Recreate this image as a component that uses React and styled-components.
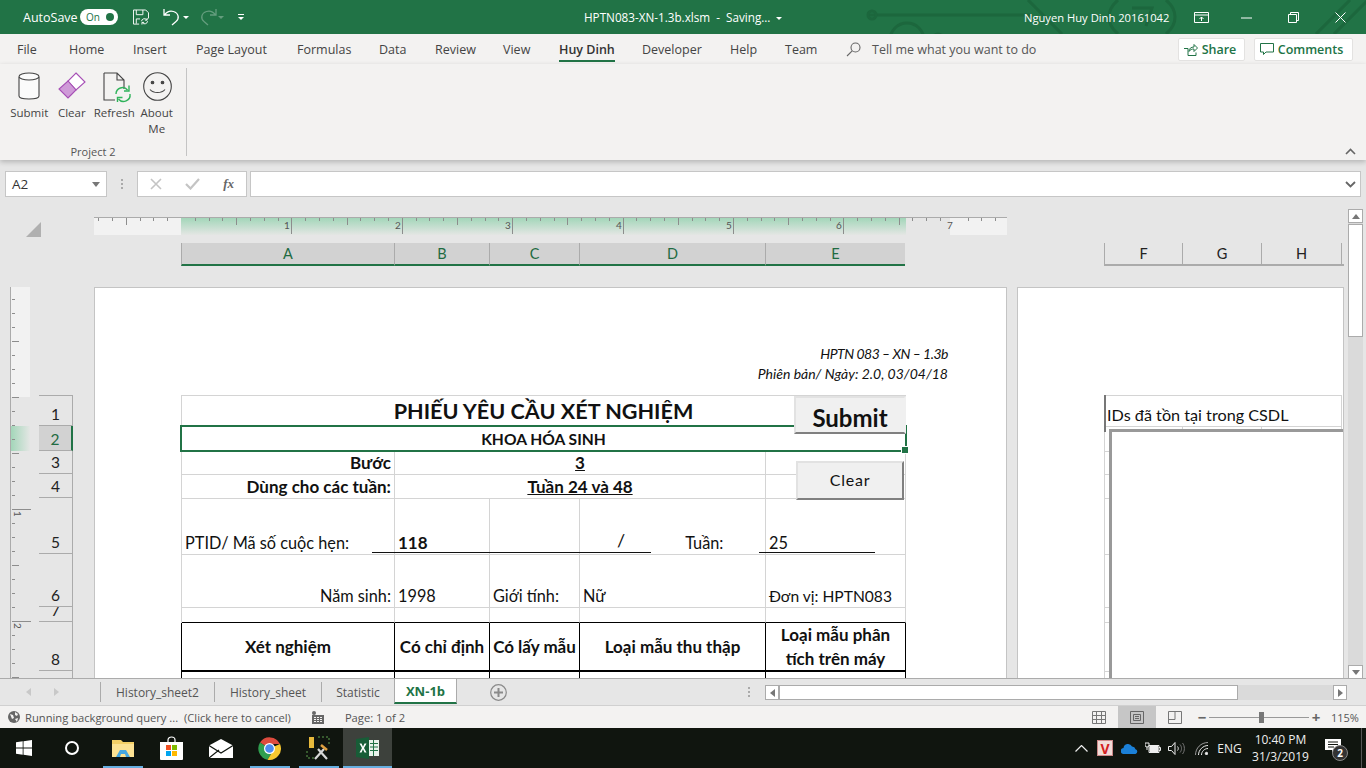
import React from 'react';
import styled, { createGlobalStyle } from 'styled-components';

const UI_FONT = '"Open Sans", "Noto Sans", sans-serif';
const SHEET_FONT = 'Lato, "Noto Sans", sans-serif';
const GREEN = '#217346';
const LINE = '#ababab';
const GRID = '#d4d4d4';

const GlobalStyle = createGlobalStyle`
  html, body {
    margin: 0;
    padding: 0;
    overflow: hidden;
    background: #e6e6e6;
  }
  * {
    box-sizing: border-box;
  }
`;

const tabs = [
  ['File', 52],
  ['Home', 64],
  ['Insert', 63],
  ['Page Layout', 101],
  ['Formulas', 82],
  ['Data', 56],
  ['Review', 68],
  ['View', 56],
  ['Huy Dinh', 83, true],
  ['Developer', 88],
  ['Help', 55],
  ['Team', 61],
];

const columns = [
  ['A', 213],
  ['B', 95],
  ['C', 90],
  ['D', 186],
  ['E', 140],
];

const rowHeights = [31, 25, 23, 24, 56, 53, 15, 49, 30];

const sheetTabs = [
  ['History_sheet2', 114],
  ['History_sheet', 107],
  ['Statistic', 73],
];

const range = (from, to) => Array.from({ length: to - from + 1 }, (_, i) => from + i);

const App = () => (
  <Window>
    <GlobalStyle />
    <TitleBar>
      <Circuit width="520" height="34" viewBox="0 0 520 34" fill="none">
        <path d="M8 15H170M30 40a17 17 0 0 1 34 0M72 40a6 6 0 0 1 12 0" />
        <circle cx="12" cy="15" r="4" />
        <path d="M168 0l34 34M258 0c-12 10-12 24 0 34M306 0c12 10 12 24 0 34M272 8h20l-6 18M456 34L490 0M474 34L508 0" />
      </Circuit>
      <QuickAccess>
        <AutoSave>AutoSave</AutoSave>
        <Toggle>
          On
          <ToggleKnob />
        </Toggle>
        <QuickIcon $w={16} $ml={15}>
          <svg width="17" height="17" viewBox="0 0 17 17" fill="none" stroke="#fff" strokeWidth="1">
            <path d="M.5.5h13l3 3v6M.5.5v15h6M3.5.5v5h7v-5M3.5 15v-5h4" />
            <path d="M9 12.5a3.2 3.2 0 0 1 5.6-1.6M15.5 12.5a3.2 3.2 0 0 1-5.6 1.6" />
            <path d="M15 9v2.3h-2.3M9.5 16v-2.3h2.3" />
          </svg>
        </QuickIcon>
        <QuickIcon $w={18} $ml={14}>
          <svg width="18" height="18" viewBox="0 0 18 18" fill="none" stroke="#fff" strokeWidth="1.3">
            <path d="M1 1v6h6M1.5 7C4 3.5 7 2.5 10.5 3.5c5.5 1.7 6 7.5 2.5 10L9 17" />
          </svg>
        </QuickIcon>
        <Caret $ml={2} />
        <QuickIcon $w={18} $ml={10} $dim>
          <svg width="18" height="18" viewBox="0 0 18 18" fill="none" stroke="#fff" strokeWidth="1.3">
            <path d="M17 1v6h-6M16.5 7C14 3.5 11 2.5 7.5 3.5c-5.5 1.7-6 7.5-2.5 10L9 17" />
          </svg>
        </QuickIcon>
        <Caret $ml={1} $dim />
        <CustomizeMark $ml={14}>
          <Caret />
        </CustomizeMark>
      </QuickAccess>
      <WindowTitle>
        HPTN083-XN-1.3b.xlsm&nbsp; -&nbsp; Saving...
        <Caret $ml={6} />
      </WindowTitle>
      <WindowControls>
        <UserName>Nguyen Huy Dinh 20161042</UserName>
        <svg width="15" height="11" viewBox="0 0 15 11" fill="none" stroke="#fff">
          <path d="M.5.5h14v10H.5zM.5 3h14M7.5 9V5M5.5 7l2-2 2 2" />
        </svg>
        <svg width="11" height="11" viewBox="0 0 11 11" stroke="#fff">
          <path d="M0 6h11" />
        </svg>
        <svg width="11" height="11" viewBox="0 0 11 11" fill="none" stroke="#fff">
          <path d="M.5 2.5h8v8h-8zM2.5 2.5v-2h8v8h-2" />
        </svg>
        <svg width="11" height="11" viewBox="0 0 11 11" stroke="#fff">
          <path d="M.5.5l10 10M10.5.5l-10 10" />
        </svg>
      </WindowControls>
    </TitleBar>

    <TabRow>
      {tabs.map(([label, width, active]) => (
        <RibbonTab key={label} $w={width} $active={active}>
          <span>{label}</span>
        </RibbonTab>
      ))}
      <svg width="15" height="15" viewBox="0 0 15 15" fill="none" stroke="#666" strokeWidth="1.1">
        <circle cx="9.5" cy="5.5" r="4.5" />
        <path d="M6.2 8.8L1 14" />
      </svg>
      <TellMe>Tell me what you want to do</TellMe>
      <ActionButton $ml={141} $w={67}>
        <svg width="15" height="15" viewBox="0 0 15 15" fill="none" stroke={GREEN}>
          <path d="M1 6.5h4v7h8v-3M6 9.5c0-3 2-4.5 5-4.5V2.5l3.5 3.5L11 9.5V7c-2 0-4 .5-5 2.5z" />
        </svg>
        Share
      </ActionButton>
      <ActionButton $ml={9} $w={99}>
        <svg width="14" height="14" viewBox="0 0 14 14" fill="none" stroke={GREEN}>
          <path d="M.5 1.5h13v8.5H6L3.5 12.5V10h-3z" />
        </svg>
        Comments
      </ActionButton>
    </TabRow>

    <Ribbon>
      <RibbonGroup>
        <RibbonButtons>
          <RibbonButton>
            <IconSlot>
              <svg width="22" height="28" viewBox="0 0 22 28" fill="#fbfbfb" stroke="#444" strokeWidth="1.1">
                <path d="M1 5v19c0 1.8 4.5 3 10 3s10-1.2 10-3V5" />
                <ellipse cx="11" cy="4.5" rx="10" ry="3.5" />
              </svg>
            </IconSlot>
            Submit
          </RibbonButton>
          <RibbonButton>
            <IconSlot>
              <svg width="28" height="28" viewBox="0 0 28 28" fill="none" stroke="#a64fb5" strokeWidth="1.1">
                <path d="M18 1l9 9-9 8-8-9z" fill="#fff" />
                <path d="M10 9l8 9-5 5-3 3-9-9z" fill="#cf9bd8" />
              </svg>
            </IconSlot>
            Clear
          </RibbonButton>
          <RibbonButton>
            <IconSlot>
              <svg width="28" height="30" viewBox="-3 0 28 30" overflow="visible" fill="none">
                <path d="M1 1h13l7 7v9M1 1v27h11M14 1v7h7" stroke="#444" strokeWidth="1.1" />
                <path d="M13 22a6.5 6.5 0 0 1 11.5-4M27 22a6.5 6.5 0 0 1-11.5 5" stroke="#2fb35b" strokeWidth="1.4" />
                <path d="M26 13.5V19h-5M14.5 30v-4.5h5" stroke="#2fb35b" strokeWidth="1.4" />
              </svg>
            </IconSlot>
            Refresh
          </RibbonButton>
          <RibbonButton>
            <IconSlot>
              <svg width="29" height="29" viewBox="-1 0 29 29" overflow="visible" fill="none" stroke="#444" strokeWidth="1.1">
                <circle cx="14.5" cy="14.5" r="13.8" />
                <circle cx="9.5" cy="10.5" r="1.3" fill="#444" />
                <circle cx="19.5" cy="10.5" r="1.3" fill="#444" />
                <path d="M7 17.5c3.5 4 11.5 4 15 0" />
              </svg>
            </IconSlot>
            About Me
          </RibbonButton>
        </RibbonButtons>
        <GroupLabel>Project 2</GroupLabel>
      </RibbonGroup>
      <CollapseMark width="11" height="7" viewBox="0 0 11 7" fill="none" stroke="#666" strokeWidth="1.6">
        <path d="M1 6l4.5-4.5L10 6" />
      </CollapseMark>
    </Ribbon>

    <FormulaBar>
      <NameBox>
        A2
        <MiniCaret />
      </NameBox>
      <GripDots />
      <FormulaButtons>
        <svg width="12" height="12" viewBox="0 0 12 12" stroke="#c4c4c4" strokeWidth="1.6">
          <path d="M1 1l10 10M11 1L1 11" />
        </svg>
        <svg width="15" height="12" viewBox="0 0 15 12" fill="none" stroke="#c4c4c4" strokeWidth="2.2">
          <path d="M1 6l4.5 4.5L14 1" />
        </svg>
        <FxMark>fx</FxMark>
      </FormulaButtons>
      <FormulaInput>
        <svg width="11" height="7" viewBox="0 0 11 7" fill="none" stroke="#666" strokeWidth="1.8">
          <path d="M1 1l4.5 4.5L10 1" />
        </svg>
      </FormulaInput>
    </FormulaBar>

    <Workspace>
      <SheetView>
        <RulerRow>
          <SelectAll>
            <svg width="15" height="15" viewBox="0 0 15 15">
              <path d="M15 0v15H0z" fill="#b0b0b0" />
            </svg>
          </SelectAll>
          <Ruler>
            <RulerMargin $w={87} />
            <RulerPrint $w={725} />
            <RulerBlank $w={44} />
            <RulerMargin $w={57} />
            <RulerTicks width="913" height="18" viewBox="0 0 913 18">
              {range(-6, 59)
                .filter((k) => k !== 0 && k !== 56)
                .map((k) => {
                  const x = Math.round(87 + k * 13.8) + 0.5;
                  const h = k % 8 === 0 ? 16 : k % 4 === 0 ? 7 : 3;
                  return <line key={k} x1={x} x2={x} y1="0" y2={h} stroke="#8d8d8d" />;
                })}
              {range(1, 7).map((n) => (
                <text key={n} x={Math.round(87 + n * 110.4) - 7} y="11" fontSize="10" fontFamily={SHEET_FONT} fill="#555">
                  {n}
                </text>
              ))}
            </RulerTicks>
          </Ruler>
        </RulerRow>

        <ColumnRow>
          {columns.map(([name, width]) => (
            <ColumnHead key={name} $w={width} $selected>
              {name}
            </ColumnHead>
          ))}
          <ColumnGap />
          <ColumnHead $w={78}>F</ColumnHead>
          <ColumnHead $w={79}>G</ColumnHead>
          <ColumnHead $w={80}>H</ColumnHead>
          <ColumnTail />
        </ColumnRow>

        <PagesRow>
          <SideRuler>
            <SideRulerMargin />
            <SideRulerBand />
            <RulerTicks width="20" height="391" viewBox="0 0 20 391">
              {range(-7, 20).map((k) => {
                const y = 110 + k * 14 + 0.5;
                const w = k % 8 === 0 && k !== 0 ? 19 : k % 4 === 0 ? 7 : 3;
                return <line key={k} x1="1" x2={1 + w} y1={y} y2={y} stroke="#8d8d8d" />;
              })}
              {[1, 2].map((n) => (
                <text
                  key={n}
                  fontSize="10"
                  fontFamily={SHEET_FONT}
                  fill="#555"
                  transform={`translate(3 ${110 + n * 112 + 2}) rotate(90)`}
                >
                  {n}
                </text>
              ))}
            </RulerTicks>
          </SideRuler>

          <RowHeads>
            {rowHeights.map((height, i) => (
              <RowHead key={i} $h={height} $selected={i === 1}>
                {i < 8 ? i + 1 : ''}
              </RowHead>
            ))}
          </RowHeads>

          <Page $w={913} $ml={21}>
            <PageHeader>
              <HeaderLine $tight>HPTN 083 – XN – 1.3b</HeaderLine>
              <HeaderLine>Phiên bản/ Ngày: 2.0, 03/04/18</HeaderLine>
            </PageHeader>
            <Sheet>
              <Cell $span={5} $center $middle $bold $size={21.6}>
                PHIẾU YÊU CẦU XÉT NGHIỆM
              </Cell>
              <Cell $span={5} $center $middle $bold $size={15.6}>
                KHOA HÓA SINH
              </Cell>

              <Cell $right $bold>Bước</Cell>
              <Cell $span={3} $center $bold $underline>3</Cell>
              <Cell />

              <Cell $right $bold>Dùng cho các tuần:</Cell>
              <Cell $span={3} $center $bold $underline>Tuần 24 và 48</Cell>
              <Cell />

              <Cell>PTID/ Mã số cuộc hẹn:</Cell>
              <Cell $bold>118</Cell>
              <Cell />
              <Cell>
                <Slash>/</Slash>
                <span>Tuần:</span>
              </Cell>
              <Cell>25</Cell>

              <Cell $right>Năm sinh:</Cell>
              <Cell>1998</Cell>
              <Cell>Giới tính:</Cell>
              <Cell>Nữ</Cell>
              <Cell $size={15.6}>Đơn vị: HPTN083</Cell>

              <Cell $strongBottom />
              <Cell $strongBottom />
              <Cell $strongBottom />
              <Cell $strongBottom />
              <Cell $strongBottom />

              <HeaderCell $first>Xét nghiệm</HeaderCell>
              <HeaderCell>Có chỉ định</HeaderCell>
              <HeaderCell>Có lấy mẫu</HeaderCell>
              <HeaderCell>Loại mẫu thu thập</HeaderCell>
              <HeaderCell>
                Loại mẫu phân
                <br />
                tích trên máy
              </HeaderCell>

              <BodyCell $first />
              <BodyCell />
              <BodyCell />
              <BodyCell />
              <BodyCell />

              <UnderRule $left={190} $top={156} $w={279} />
              <UnderRule $left={577} $top={156} $w={116} />

              <Selection>
                <SelectionHandle />
              </Selection>
              <SheetButton $left={612} $top={0} $w={112} $h={38} $big>
                Submit
              </SheetButton>
              <SheetButton $left={614} $top={65} $w={108} $h={39}>
                Clear
              </SheetButton>
            </Sheet>
          </Page>

          <Page $w={327} $ml={10}>
            <SideSheet>
              <SideCell $span={3} $flag>
                IDs đã tồn tại trong CSDL
              </SideCell>
              {rowHeights.slice(1).flatMap((_, r) =>
                [0, 1, 2].map((c) => <SideCell key={`${r}-${c}`} />),
              )}
              <IdsBox />
            </SideSheet>
          </Page>
        </PagesRow>
      </SheetView>

      <VerticalScroll>
        <ScrollButton>
          <ArrowUp />
        </ScrollButton>
        <ScrollThumb />
        <ScrollTrack />
        <ScrollButton>
          <MiniCaret />
        </ScrollButton>
      </VerticalScroll>
    </Workspace>

    <SheetTabBar>
      <TabNav>
        <NavArrow $left />
        <NavArrow />
      </TabNav>
      {sheetTabs.map(([label, width]) => (
        <SheetTab key={label} $w={width}>
          {label}
        </SheetTab>
      ))}
      <ActiveSheetTab>XN-1b</ActiveSheetTab>
      <AddSheet>
        <svg width="17" height="17" viewBox="0 0 17 17" fill="none" stroke="#8a8a8a">
          <circle cx="8.5" cy="8.5" r="7.8" strokeWidth="1.2" />
          <path d="M8.5 4v9M4 8.5h9" strokeWidth="2" />
        </svg>
      </AddSheet>
      <GripDots $ml={241} />
      <HorizontalScroll>
        <HScrollButton>
          <NavArrow $left $dark />
        </HScrollButton>
        <HScrollThumb />
        <HScrollTrack />
        <HScrollButton>
          <NavArrow $dark />
        </HScrollButton>
      </HorizontalScroll>
    </SheetTabBar>

    <StatusBar>
      <svg width="12" height="12" viewBox="0 0 12 12">
        <circle cx="6" cy="6" r="6" fill="#666" />
        <path d="M2 3l3 1 1 3-2 1zM7 1l3 2-1 2-2-1zM7 8l3-1-1 4z" fill="#f3f2f1" />
      </svg>
      <StatusText $ml={5}>Running background query ...&nbsp; (Click here to cancel)</StatusText>
      <MacroIcon width="13" height="13" viewBox="0 0 13 13">
        <path d="M1 4h12v9H1z" fill="#666" />
        <path d="M3 6h2v1H3zM6 6h2v1H6zM9 6h2v1H9zM3 8h2v1H3zM6 8h2v1H6zM9 8h2v1H9zM3 10h2v1H3zM6 10h2v1H6zM9 10h2v1H9z" fill="#f3f2f1" />
        <circle cx="3" cy="2" r="2" fill="#666" />
      </MacroIcon>
      <StatusText $ml={21}>Page: 1 of 2</StatusText>
      <ViewButtons>
        <ViewButton>
          <svg width="14" height="13" viewBox="0 0 14 13" fill="none" stroke="#777">
            <path d="M.5.5h13v12H.5zM.5 4.5h13M.5 8.5h13M4.5.5v12M9.5.5v12" />
          </svg>
        </ViewButton>
        <ViewButton $active>
          <svg width="14" height="13" viewBox="0 0 14 13" fill="none" stroke="#666">
            <path d="M.5.5h13v12H.5zM3.5 3.5h7v6h-7zM5 5.5h4M5 7.5h4" />
          </svg>
        </ViewButton>
        <ViewButton>
          <svg width="14" height="13" viewBox="0 0 14 13" fill="none" stroke="#777">
            <path d="M.5.5h13v12H.5zM.5 8.5h6.5V.5" />
          </svg>
        </ViewButton>
      </ViewButtons>
      <ZoomSlider>
        <ZoomMark>−</ZoomMark>
        <ZoomTrack>
          <ZoomThumb />
        </ZoomTrack>
        <ZoomMark>+</ZoomMark>
      </ZoomSlider>
      <ZoomValue>115%</ZoomValue>
    </StatusBar>

    <Taskbar>
      <TaskSlot $w={48}>
        <svg width="16" height="16" viewBox="0 0 16 16" fill="#fff">
          <path d="M0 2.3l6.7-1v6.3H0zM7.5 1.2L16 0v7.6H7.5zM0 8.4h6.7v6.3l-6.7-1zM7.5 8.4H16V16l-8.5-1.2z" />
        </svg>
      </TaskSlot>
      <TaskSlot $w={48} $mr={2}>
        <CortanaRing />
      </TaskSlot>
      <TaskSlot $w={49} $open>
        <svg width="22" height="19" viewBox="0 0 22 19">
          <path d="M0 1h9l2 2h11v15H0z" fill="#f4cf66" />
          <path d="M0 5h22v13H0z" fill="#fde293" />
          <path d="M4 18l4-7h6l4 7h-4l-1-3H9l-1 3z" fill="#45a7e2" />
        </svg>
      </TaskSlot>
      <TaskSlot $w={49}>
        <svg width="23" height="24" viewBox="0 0 23 24">
          <path d="M8 6V4c0-4 7-4 7 0v2" fill="none" stroke="#fff" strokeWidth="1.2" />
          <path d="M0 6h23v17a1 1 0 0 1-1 1H1a1 1 0 0 1-1-1z" fill="#fff" />
          <path d="M6 9h5v5H6z" fill="#f25022" />
          <path d="M12 9h5v5h-5z" fill="#7fba00" />
          <path d="M6 15h5v5H6z" fill="#00a4ef" />
          <path d="M12 15h5v5h-5z" fill="#ffb900" />
        </svg>
      </TaskSlot>
      <TaskSlot $w={49}>
        <svg width="24" height="19" viewBox="0 0 24 19">
          <path d="M0 6.5L12 0l12 6.5V19H0z" fill="#fff" />
          <path d="M0 6.5L12 14l12-7.5M0 19l10-8" fill="none" stroke="#10150f" strokeWidth="1.2" />
        </svg>
      </TaskSlot>
      <TaskSlot $w={49} $open>
        <svg width="23" height="23" viewBox="0 0 23 23">
          <path d="M11.5 11.5L2 5.5A11.5 11.5 0 0 1 22 7H11.5z" fill="#dd4b3e" />
          <path d="M11.5 11.5L2 5.5A11.5 11.5 0 0 0 9.5 22.8l5-8z" fill="#2f9e4f" />
          <path d="M11.5 11.5L22 7a11.5 11.5 0 0 1-12.5 15.8l5-8z" fill="#f7c830" />
          <circle cx="11.5" cy="11.5" r="5.5" fill="#fff" />
          <circle cx="11.5" cy="11.5" r="4.3" fill="#4c8bf0" />
        </svg>
      </TaskSlot>
      <TaskSlot $w={49} $open>
        <svg width="25" height="25" viewBox="0 0 25 25" fill="none">
          <path d="M3 1h5v11H3z" fill="#e7b93c" />
          <path d="M12 1h11v8M1 15v7h8" stroke="#5fa04f" strokeDasharray="2 2" />
          <path d="M9 23l9-10M12 13l9 10" stroke="#d8d8d8" strokeWidth="2.2" />
          <path d="M15 9l6 5" stroke="#e0a040" strokeWidth="2.5" />
        </svg>
      </TaskSlot>
      <TaskSlot $w={49} $open $current>
        <svg width="23" height="22" viewBox="0 0 23 22">
          <path d="M13 3h10v16H13z" fill="#e9f3ec" />
          <path d="M14 6.5h8M14 10h8M14 13.5h8M17.5 3v16" stroke="#217346" fill="none" />
          <path d="M0 2l13-2v22L0 20z" fill="#185c37" />
          <path d="M3.5 6.5L6 11l-2.5 4.5h2L7 12.3l1.5 3.2h2L8 11l2.5-4.5h-2L7 9.7 5.5 6.5z" fill="#fff" />
        </svg>
      </TaskSlot>
      <Tray>
        <TraySlot $w={24}>
          <svg width="13" height="7" viewBox="0 0 13 7" fill="none" stroke="#eee" strokeWidth="1.2">
            <path d="M.5 6.5l6-6 6 6" />
          </svg>
        </TraySlot>
        <TraySlot $w={24}>
          <AvIcon>V</AvIcon>
        </TraySlot>
        <TraySlot $w={24}>
          <svg width="17" height="11" viewBox="0 0 17 11">
            <path d="M3 11a3 3 0 0 1-.5-6A4.5 4.5 0 0 1 11 3.5a3.5 3.5 0 0 1 3.5 2.7A2.5 2.5 0 0 1 14.5 11z" fill="#1b80d8" />
          </svg>
        </TraySlot>
        <TraySlot $w={23}>
          <svg width="16" height="12" viewBox="0 0 16 12" fill="none" stroke="#eee">
            <path d="M4 3.5h10v7H4zM14 5.5h1.5v3H14" />
            <path d="M5 4.5h8v5H5z" fill="#eee" />
            <path d="M0 1v2a2 2 0 0 0 4 0V1zM2 5v3" />
          </svg>
        </TraySlot>
        <TraySlot $w={25}>
          <svg width="17" height="13" viewBox="0 0 17 13" fill="none" stroke="#eee">
            <path d="M.5 4.5h3l3.5-4v12l-3.5-4h-3z" />
            <path d="M9.5 4.5c1 1 1 3 0 4" />
            <path d="M12 2.5c2 2.3 2 5.7 0 8M14.5 1c2.5 3 2.5 8 0 11" stroke="#777" />
          </svg>
        </TraySlot>
        <TraySlot $w={25}>
          <svg width="13" height="13" viewBox="0 0 13 13" fill="none" stroke="#eee">
            <path d="M.5 13C.5 6 6 .5 13 .5" stroke="#999" />
            <path d="M3.5 13c0-5 4.5-9.5 9.5-9.5M6.5 13c0-3.5 3-6.5 6.5-6.5" />
            <circle cx="11.5" cy="11.5" r="1.2" fill="#eee" />
          </svg>
        </TraySlot>
        <TrayLabel $w={31}>ENG</TrayLabel>
        <Clock>
          <span>10:40 PM</span>
          <span>31/3/2019</span>
        </Clock>
        <TraySlot $w={24} $ml={9}>
          <NoticeIcon>
            <svg width="16" height="14" viewBox="0 0 16 14">
              <path d="M0 0h16v11h-6l-3 3v-3H0z" fill="#fff" />
              <path d="M3 3h10M3 5.5h10M3 8h6" stroke="#10150f" />
            </svg>
            <NoticeBadge>2</NoticeBadge>
          </NoticeIcon>
        </TraySlot>
        <ShowDesktop />
      </Tray>
    </Taskbar>
  </Window>
);

const Window = styled.div`
  width: 1366px;
  height: 768px;
  display: flex;
  flex-direction: column;
  overflow: hidden;
  background: #e6e6e6;
  font-family: ${UI_FONT};
  font-size: 12px;
  color: #444;
`;

const TitleBar = styled.header`
  position: relative;
  flex: 0 0 34px;
  display: flex;
  align-items: center;
  padding-left: 23px;
  background: ${GREEN};
  color: #fff;
`;

const Circuit = styled.svg`
  position: absolute;
  left: 860px;
  top: 0;
  stroke: #1c673d;
  stroke-width: 3;
`;

const QuickAccess = styled.div`
  position: relative;
  flex: 0 0 561px;
  display: flex;
  align-items: center;
`;

const AutoSave = styled.span`
  font-size: 12.5px;
  width: 57px;
`;

const Toggle = styled.span`
  position: relative;
  width: 38px;
  height: 16px;
  padding-left: 6px;
  border-radius: 8px;
  background: #fff;
  color: ${GREEN};
  font-size: 10px;
  line-height: 16px;
`;

const ToggleKnob = styled.i`
  position: absolute;
  right: 4px;
  top: 4px;
  width: 8px;
  height: 8px;
  border-radius: 50%;
  background: ${GREEN};
`;

const QuickIcon = styled.span`
  width: ${(p) => p.$w}px;
  height: 18px;
  margin-left: ${(p) => p.$ml}px;
  opacity: ${(p) => (p.$dim ? 0.3 : 1)};
  display: flex;
  align-items: center;
`;

const Caret = styled.i`
  display: inline-block;
  width: 0;
  height: 0;
  margin-left: ${(p) => p.$ml || 0}px;
  border-left: 3px solid transparent;
  border-right: 3px solid transparent;
  border-top: 3px solid #fff;
  opacity: ${(p) => (p.$dim ? 0.3 : 1)};
  vertical-align: middle;
`;

const CustomizeMark = styled.span`
  display: flex;
  flex-direction: column;
  width: 6px;
  margin-left: ${(p) => p.$ml}px;
  border-top: 1px solid #fff;
  padding-top: 2px;
  line-height: 0;
`;

const WindowTitle = styled.div`
  position: relative;
  flex: 0 0 auto;
  font-size: 11.7px;
`;

const WindowControls = styled.div`
  position: relative;
  margin-left: auto;
  display: flex;
  align-items: center;
  padding-right: 20px;
  gap: 36px;

  svg:nth-of-type(1) {
    margin-right: -4px;
  }
`;

const UserName = styled.span`
  width: 144px;
  margin-right: -10px;
  font-size: 11.2px;
  white-space: nowrap;
`;

const TabRow = styled.nav`
  flex: 0 0 30px;
  height: 30px;
  display: flex;
  align-items: center;
  padding-left: 17px;
  background: #f3f2f1;
`;

const RibbonTab = styled.div`
  width: ${(p) => p.$w}px;
  height: 30px;
  font-size: 12.5px;
  line-height: 31px;
  color: ${(p) => (p.$active ? '#333' : '#444')};

  span {
    display: inline-block;
    height: 28px;
    white-space: nowrap;
    font-weight: ${(p) => (p.$active ? 600 : 400)};
    border-bottom: ${(p) => (p.$active ? `2px solid ${GREEN}` : 'none')};
  }
`;

const TellMe = styled.span`
  width: 165px;
  margin-left: 11px;
  font-size: 12.5px;
  color: #555;
  white-space: nowrap;
`;

const ActionButton = styled.div`
  width: ${(p) => p.$w}px;
  height: 23px;
  margin-left: ${(p) => p.$ml}px;
  padding-right: 4px;
  display: flex;
  align-items: center;
  justify-content: center;
  gap: 4px;
  background: #fff;
  border: 1px solid #e3e2e1;
  border-radius: 2px;
  color: ${GREEN};
  font-size: 12.5px;
  font-weight: 600;
`;

const Ribbon = styled.section`
  position: relative;
  z-index: 1;
  flex: 0 0 96px;
  display: flex;
  background: #f3f2f1;
  box-shadow: 0 2px 5px rgba(0, 0, 0, 0.22);
`;

const RibbonGroup = styled.div`
  width: 187px;
  height: 88px;
  margin-top: 4px;
  display: flex;
  flex-direction: column;
  border-right: 1px solid #c4c4c4;
`;

const RibbonButtons = styled.div`
  display: flex;
  padding: 4px 0 0 8px;
`;

const RibbonButton = styled.div`
  width: 42.5px;
  text-align: center;
  font-size: 11.5px;
  line-height: 16px;
  color: #444;
`;

const IconSlot = styled.div`
  height: 33px;
  display: flex;
  justify-content: center;
  align-items: flex-start;
`;

const GroupLabel = styled.div`
  margin-top: auto;
  margin-bottom: -4px;
  text-align: center;
  font-size: 11px;
  line-height: 16px;
  color: #555;
`;

const CollapseMark = styled.svg`
  position: absolute;
  right: 10px;
  bottom: 5px;
`;

const FormulaBar = styled.section`
  flex: 0 0 45px;
  display: flex;
  align-items: flex-start;
  padding: 11px 5px 0;
  background: #e6e6e6;
`;

const NameBox = styled.div`
  width: 102px;
  height: 26px;
  display: flex;
  align-items: center;
  justify-content: space-between;
  padding: 0 6px;
  background: #fff;
  border: 1px solid #c6c6c6;
  font-size: 13.5px;
  color: #333;
`;

const MiniCaret = styled.i`
  width: 0;
  height: 0;
  border-left: 4px solid transparent;
  border-right: 4px solid transparent;
  border-top: 5px solid #777;
`;

const GripDots = styled.i`
  width: 2px;
  height: 10px;
  margin: 8px 14px 0;
  margin-left: ${(p) => (p.$ml ? `${p.$ml}px` : '14px')};
  flex: 0 0 2px;
  background: repeating-linear-gradient(#aaa 0 2px, transparent 2px 4px);
`;

const FormulaButtons = styled.div`
  width: 110px;
  height: 26px;
  display: flex;
  align-items: center;
  justify-content: space-between;
  padding: 0 12px;
  background: #fff;
  border: 1px solid #c6c6c6;
`;

const FxMark = styled.span`
  font-family: "Liberation Serif", serif;
  font-style: italic;
  font-weight: 700;
  font-size: 13px;
  color: #666;
`;

const FormulaInput = styled.div`
  flex: 1;
  height: 26px;
  margin-left: 3px;
  display: flex;
  align-items: center;
  justify-content: flex-end;
  padding-right: 4px;
  background: #fff;
  border: 1px solid #c6c6c6;
`;

const Workspace = styled.main`
  flex: 0 0 473px;
  display: flex;
  background: #e6e6e6;
  overflow: hidden;
`;

const SheetView = styled.div`
  width: 1348px;
  display: flex;
  flex-direction: column;
`;

const RulerRow = styled.div`
  display: flex;
  height: 18px;
  margin-top: 12px;
`;

const SelectAll = styled.div`
  width: 94px;
  padding: 5px 0 0 26px;
`;

const Ruler = styled.div`
  position: relative;
  display: flex;
  width: 913px;
  border-top: 1px solid ${LINE};
`;

const RulerMargin = styled.div`
  width: ${(p) => p.$w}px;
  background: #f2f2f2;
`;

const RulerPrint = styled.div`
  width: ${(p) => p.$w}px;
  background: linear-gradient(#a3d6b9, #e4e6e4);
`;

const RulerBlank = styled.div`
  width: ${(p) => p.$w}px;
`;

const RulerTicks = styled.svg`
  position: absolute;
  left: 0;
  top: 0;
`;

const ColumnRow = styled.div`
  display: flex;
  height: 23px;
  margin-top: 8px;
  padding-left: 181px;
`;

const ColumnHead = styled.div`
  width: ${(p) => p.$w}px;
  display: flex;
  align-items: center;
  justify-content: center;
  font-family: ${SHEET_FONT};
  font-size: 14.5px;
  background: ${(p) => (p.$selected ? '#d2d2d2' : 'transparent')};
  color: ${(p) => (p.$selected ? '#1f6b42' : '#222')};
  border-left: 1px solid ${LINE};
  border-bottom: 2px solid ${(p) => (p.$selected ? GREEN : LINE)};
`;

const ColumnGap = styled.div`
  width: 199px;
`;

const ColumnTail = styled.div`
  width: 3px;
  border-left: 1px solid ${LINE};
  border-bottom: 2px solid ${LINE};
`;

const PagesRow = styled.div`
  flex: 1;
  min-height: 0;
  display: flex;
  margin-top: 21px;
  padding-left: 10px;
  overflow: hidden;
`;

const SideRuler = styled.div`
  position: relative;
  flex: 0 0 20px;
  border-left: 1px solid ${LINE};
`;

const SideRulerMargin = styled.div`
  height: 110px;
  background: #f2f2f2;
`;

const SideRulerBand = styled.div`
  height: 25px;
  margin-top: 29px;
  background: linear-gradient(90deg, #a3d6b9, #e4e6e4);
`;

const RowHeads = styled.div`
  flex: 0 0 34px;
  margin-left: 9px;
  padding-top: 108px;
`;

const RowHead = styled.div`
  height: ${(p) => p.$h}px;
  display: flex;
  align-items: flex-end;
  justify-content: center;
  overflow: hidden;
  padding-bottom: 2px;
  font-family: ${SHEET_FONT};
  font-size: 15.5px;
  line-height: 18px;
  background: ${(p) => (p.$selected ? '#d2d2d2' : 'transparent')};
  color: ${(p) => (p.$selected ? '#1f6b42' : '#222')};
  border-bottom: 1px solid ${LINE};
  border-right: ${(p) => (p.$selected ? `2px solid ${GREEN}` : `1px solid ${LINE}`)};

  &:first-child {
    border-top: 1px solid ${LINE};
  }
`;

const Page = styled.div`
  flex: 0 0 ${(p) => p.$w}px;
  margin-left: ${(p) => p.$ml}px;
  height: 420px;
  overflow: hidden;
  background: #fff;
  border: 1px solid #c4c4c4;
`;

const PageHeader = styled.div`
  height: 107px;
  padding: 56px 58px 0 0;
  text-align: right;
  font-family: ${SHEET_FONT};
  font-size: 14px;
  font-style: italic;
  line-height: 20px;
  color: #111;
`;

const HeaderLine = styled.div`
  letter-spacing: ${(p) => (p.$tight ? -0.5 : 0)}px;
`;

const Sheet = styled.div`
  position: relative;
  display: grid;
  grid-template-columns: 213px 95px 90px 186px 140px;
  grid-template-rows: 31px 25px 23px 24px 56px 53px 15px 49px 30px;
  width: 725px;
  margin-left: 86px;
  border-top: 1px solid ${GRID};
  border-left: 1px solid ${GRID};
  font-family: ${SHEET_FONT};
  color: #111;
`;

const Cell = styled.div`
  grid-column: span ${(p) => p.$span || 1};
  display: flex;
  align-items: ${(p) => (p.$middle ? 'center' : 'flex-end')};
  justify-content: ${(p) => (p.$center ? 'center' : p.$right ? 'flex-end' : 'flex-start')};
  padding: 0 3px ${(p) => (p.$middle ? 0 : 1)}px;
  border-right: 1px solid ${GRID};
  border-bottom: 1px solid ${(p) => (p.$strongBottom ? '#000' : GRID)};
  font-size: ${(p) => p.$size || (p.$bold ? 17 : 16.3)}px;
  font-weight: ${(p) => (p.$bold ? 700 : 400)};
  line-height: 20px;
  white-space: nowrap;
  text-decoration: ${(p) => (p.$underline ? 'underline' : 'none')};
`;

const Slash = styled.span`
  margin: 0 60px 3px 34px;
  font-size: 18px;
`;

const HeaderCell = styled.div`
  display: flex;
  align-items: center;
  justify-content: center;
  text-align: center;
  font-size: 17px;
  font-weight: 700;
  line-height: 24px;
  white-space: nowrap;
  border-right: 1px solid #000;
  border-bottom: 2px solid #000;
  box-shadow: ${(p) => (p.$first ? '-1px 0 0 #000' : 'none')};
`;

const BodyCell = styled.div`
  border-right: 1px solid #000;
  box-shadow: ${(p) => (p.$first ? '-1px 0 0 #000' : 'none')};
`;

const UnderRule = styled.i`
  position: absolute;
  left: ${(p) => p.$left}px;
  top: ${(p) => p.$top}px;
  width: ${(p) => p.$w}px;
  height: 1px;
  background: #111;
`;

const Selection = styled.div`
  position: absolute;
  left: -2px;
  top: 29px;
  width: 727px;
  height: 27px;
  border: 2px solid ${GREEN};
`;

const SelectionHandle = styled.i`
  position: absolute;
  right: -3px;
  bottom: -3px;
  width: 6px;
  height: 6px;
  background: ${GREEN};
  outline: 1px solid #fff;
`;

const SheetButton = styled.div`
  position: absolute;
  left: ${(p) => p.$left}px;
  top: ${(p) => p.$top}px;
  width: ${(p) => p.$w}px;
  height: ${(p) => p.$h}px;
  display: flex;
  align-items: center;
  justify-content: center;
  padding: ${(p) => (p.$big ? '4px 0 0' : '0 0 2px')};
  background: #f0f0f0;
  border-top: 2px solid #e2e2e2;
  border-left: 2px solid #e2e2e2;
  border-right: 2px solid ${(p) => (p.$big ? '#f0f0f0' : '#808080')};
  border-bottom: 2px solid #808080;
  font-size: ${(p) => (p.$big ? 24 : 16)}px;
  font-weight: ${(p) => (p.$big ? 700 : 400)};
  letter-spacing: ${(p) => (p.$big ? 0 : 0.8)}px;
  color: #111;
`;

const SideSheet = styled.div`
  position: relative;
  display: grid;
  grid-template-columns: 78px 79px 80px;
  grid-template-rows: 31px 25px 23px 24px 56px 53px 15px 49px 30px;
  width: 238px;
  margin: 107px 0 0 86px;
  border-top: 1px solid ${GRID};
  border-left: 1px solid ${GRID};
  font-family: ${SHEET_FONT};
  color: #111;
`;

const SideCell = styled.div`
  position: relative;
  grid-column: span ${(p) => p.$span || 1};
  display: flex;
  align-items: flex-end;
  padding: 0 0 1px 2px;
  border-right: 1px solid ${GRID};
  border-bottom: 1px solid ${GRID};
  font-size: 16.2px;
  line-height: 20px;
  white-space: nowrap;

  ${(p) =>
    p.$flag &&
    `&::before {
      content: '';
      position: absolute;
      left: -1px;
      top: -1px;
      width: 2px;
      height: 37px;
      background: #777;
    }`}
`;

const IdsBox = styled.div`
  position: absolute;
  left: 4px;
  top: 33px;
  width: 260px;
  height: 300px;
  background: #fff;
  border-top: 3px solid #999;
  border-left: 3px solid #999;
`;

const VerticalScroll = styled.aside`
  width: 15px;
  height: 470px;
  margin-top: 4px;
  display: flex;
  flex-direction: column;
  background: #dadada;
`;

const ScrollButton = styled.div`
  flex: 0 0 14px;
  display: flex;
  align-items: center;
  justify-content: center;
  background: #fff;
  border: 1px solid ${LINE};
`;

const ArrowUp = styled.i`
  width: 0;
  height: 0;
  border-left: 4px solid transparent;
  border-right: 4px solid transparent;
  border-bottom: 5px solid #777;
`;

const ScrollThumb = styled.div`
  flex: 0 0 113px;
  margin-top: 1px;
  background: #fff;
  border: 1px solid ${LINE};
`;

const ScrollTrack = styled.div`
  flex: 0 0 328px;
`;

const SheetTabBar = styled.section`
  position: relative;
  z-index: 1;
  flex: 0 0 28px;
  height: 28px;
  display: flex;
  align-items: flex-start;
  background: #e6e6e6;
  border-top: 1px solid ${LINE};
  border-bottom: 1px solid #d0d0d0;
`;

const TabNav = styled.div`
  width: 100px;
  height: 25px;
  display: flex;
  align-items: center;
  padding-left: 26px;
  gap: 23px;
`;

const NavArrow = styled.i`
  width: 0;
  height: 0;
  border-top: 4px solid transparent;
  border-bottom: 4px solid transparent;
  ${(p) =>
    p.$left
      ? `border-right: 5px solid ${p.$dark ? '#777' : '#c8c8c8'};`
      : `border-left: 5px solid ${p.$dark ? '#777' : '#c8c8c8'};`}
`;

const SheetTab = styled.div`
  width: ${(p) => p.$w}px;
  height: 20px;
  margin-top: 3px;
  display: flex;
  align-items: center;
  justify-content: center;
  border-left: 1px solid ${LINE};
  font-size: 12px;
  color: #555;
`;

const ActiveSheetTab = styled.div`
  width: 63px;
  height: 25px;
  display: flex;
  align-items: center;
  justify-content: center;
  background: #fff;
  border-left: 1px solid ${LINE};
  border-right: 1px solid ${LINE};
  border-bottom: 2px solid ${GREEN};
  color: ${GREEN};
  font-size: 13px;
  font-weight: 700;
`;

const AddSheet = styled.div`
  margin: 5px 0 0 33px;
  line-height: 0;
`;

const HorizontalScroll = styled.div`
  display: flex;
  width: 582px;
  height: 15px;
  margin: 6px 0 0 1px;
  background: #dadada;
`;

const HScrollButton = styled.div`
  flex: 0 0 14px;
  display: flex;
  align-items: center;
  justify-content: center;
  background: #fff;
  border: 1px solid ${LINE};
`;

const HScrollThumb = styled.div`
  flex: 0 0 459px;
  background: #fff;
  border: 1px solid ${LINE};
`;

const HScrollTrack = styled.div`
  flex: 1;
`;

const StatusBar = styled.footer`
  flex: 0 0 22px;
  display: flex;
  align-items: center;
  padding: 0 8px;
  background: #f3f2f1;
`;

const StatusText = styled.span`
  margin-left: ${(p) => p.$ml}px;
  font-size: 11.2px;
  color: #555;
  white-space: nowrap;
`;

const MacroIcon = styled.svg`
  margin-left: 20px;
`;

const ViewButtons = styled.div`
  margin-left: auto;
  height: 100%;
  display: flex;
`;

const ViewButton = styled.div`
  width: 38px;
  display: flex;
  align-items: center;
  justify-content: center;
  background: ${(p) => (p.$active ? '#c6c6c6' : 'transparent')};
`;

const ZoomSlider = styled.div`
  display: flex;
  align-items: center;
  margin-left: 3px;
  gap: 2px;
`;

const ZoomMark = styled.span`
  width: 10px;
  text-align: center;
  font-size: 15px;
  font-weight: 700;
  line-height: 16px;
  color: #666;
`;

const ZoomTrack = styled.div`
  position: relative;
  width: 100px;
  height: 1px;
  background: #999;
`;

const ZoomThumb = styled.i`
  position: absolute;
  left: 50px;
  top: -5px;
  width: 5px;
  height: 11px;
  background: #777;
`;

const ZoomValue = styled.span`
  width: 27px;
  margin-left: 10px;
  font-size: 11px;
  color: #555;
  white-space: nowrap;
`;

const Taskbar = styled.footer`
  flex: 0 0 40px;
  display: flex;
  background: #10150f;
  color: #eee;
`;

const TaskSlot = styled.div`
  position: relative;
  width: ${(p) => p.$w}px;
  margin-right: ${(p) => p.$mr || 0}px;
  display: flex;
  align-items: center;
  justify-content: center;
  background: ${(p) => (p.$current ? '#3d413c' : 'transparent')};

  &::after {
    content: '';
    position: absolute;
    left: ${(p) => (p.$current ? 0 : 5)}px;
    right: ${(p) => (p.$current ? 0 : 4)}px;
    bottom: 0;
    height: 2px;
    background: ${(p) => (p.$open ? '#66aee0' : 'transparent')};
  }
`;

const CortanaRing = styled.i`
  width: 14px;
  height: 14px;
  border-radius: 50%;
  border: 2px solid #fff;
`;

const Tray = styled.div`
  display: flex;
  align-items: stretch;
  margin-left: auto;
`;

const TraySlot = styled.div`
  width: ${(p) => p.$w}px;
  margin-left: ${(p) => p.$ml || 0}px;
  display: flex;
  align-items: center;
  justify-content: center;
`;

const AvIcon = styled.span`
  width: 16px;
  height: 16px;
  display: flex;
  align-items: center;
  justify-content: center;
  background: #f2dcd8;
  border: 1px solid #c88;
  color: #d32020;
  font-size: 14px;
  font-weight: 700;
`;

const TrayLabel = styled.span`
  width: ${(p) => p.$w}px;
  display: flex;
  align-items: center;
  justify-content: center;
  font-size: 12px;
`;

const Clock = styled.div`
  width: 71px;
  display: flex;
  flex-direction: column;
  align-items: center;
  justify-content: center;
  font-size: 12px;
  line-height: 17px;
  white-space: nowrap;
`;

const NoticeIcon = styled.div`
  position: relative;
  width: 16px;
  height: 14px;
  margin-left: -8px;
  margin-top: -4px;
`;

const NoticeBadge = styled.span`
  position: absolute;
  left: 7px;
  top: 6px;
  width: 16px;
  height: 16px;
  border-radius: 50%;
  background: #333;
  border: 1px solid #888;
  color: #fff;
  font-size: 10px;
  font-weight: 700;
  line-height: 14px;
  text-align: center;
`;

const ShowDesktop = styled.i`
  width: 1px;
  margin-left: 12px;
  margin-right: 4px;
  background: #555;
`;

export default App;
